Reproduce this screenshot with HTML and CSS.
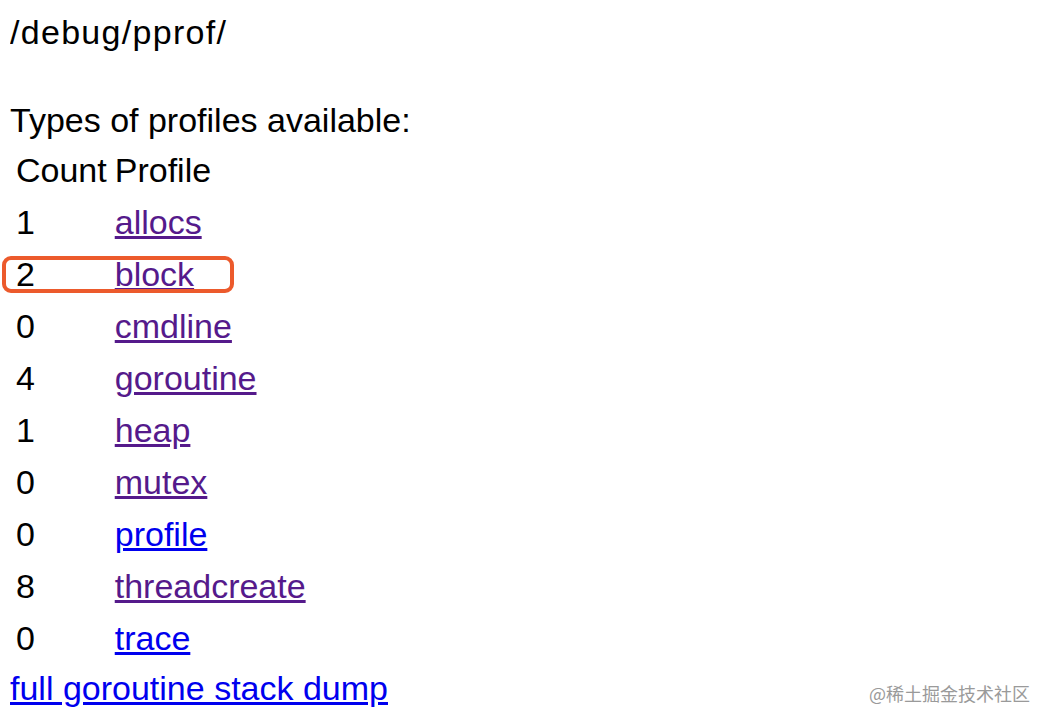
FILE: index.html
```html
<!DOCTYPE html>
<html>
<head>
<meta charset="utf-8">
<title>/debug/pprof/</title>
<link rel="stylesheet" href="styles.css">
</head>
<body>
<span class="path">/debug/pprof/</span><br>
<br>
Types of profiles available:
<table class="profiles">
<thead><tr><td>Count</td><td>Profile</td></tr></thead>
<tbody>
<tr><td>1</td><td><a class="visited" href="#">allocs</a></td></tr>
<tr><td>2</td><td><a class="visited" href="#">block</a></td></tr>
<tr><td>0</td><td><a class="visited" href="#">cmdline</a></td></tr>
<tr><td>4</td><td><a class="visited" href="#">goroutine</a></td></tr>
<tr><td>1</td><td><a class="visited" href="#">heap</a></td></tr>
<tr><td>0</td><td><a class="visited" href="#">mutex</a></td></tr>
<tr><td>0</td><td><a class="link" href="#">profile</a></td></tr>
<tr><td>8</td><td><a class="visited" href="#">threadcreate</a></td></tr>
<tr><td>0</td><td><a class="link" href="#">trace</a></td></tr>
</tbody>
</table>
<a class="link" href="#">full goroutine stack dump</a>
<div class="highlight"></div>
<div class="watermark">@稀土掘金技术社区</div>
</body>
</html>
```
FILE: styles.css
```css
html, body {
  background: #ffffff;
}
body {
  margin: 10px 10px;
  font-family: "Liberation Sans", Arial, "Noto Sans CJK SC", sans-serif;
  font-size: 34px;
  line-height: 44px;
  color: #000000;
}
.path {
  letter-spacing: 1.3px;
}
.profiles {
  border-collapse: separate;
  border-spacing: 4px;
  margin-left: 0;
}
.profiles td {
  padding: 2px;
  line-height: 44px;
  font-size: 34px;
  vertical-align: middle;
}
.link {
  color: #0000ee;
  text-decoration: underline;
}
.visited {
  color: #551a8b;
  text-decoration: underline;
}
.highlight {
  position: absolute;
  left: 2px;
  top: 256px;
  width: 224px;
  height: 29px;
  border: 4px solid #ec5a2c;
  border-radius: 9px;
}
.watermark {
  position: absolute;
  right: 20px;
  top: 680px;
  font-family: "Noto Sans CJK SC", "Liberation Sans", sans-serif;
  font-size: 18px;
  line-height: 26px;
  color: #9a9a9a;
}
```
